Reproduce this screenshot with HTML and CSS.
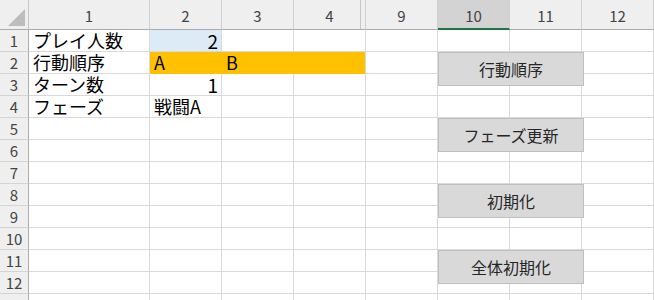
FILE: index.html
```html
<!DOCTYPE html>
<html lang="ja">
<head>
  <meta charset="UTF-8">
  <title>Sheet1</title>
  <link rel="stylesheet" href="styles.css">
</head>
<body>
  <div class="sheet">
    <div class="grid">
      <div class="corner">
        <svg width="29" height="30" viewBox="0 0 29 30"><polygon points="9,27 26,27 26,10" fill="#bdbdbd"/></svg>
      </div>
      <div class="ch">1</div>
      <div class="ch">2</div>
      <div class="ch">3</div>
      <div class="ch hidden-after">4</div>
      <div class="ch">9</div>
      <div class="ch selected">10</div>
      <div class="ch">11</div>
      <div class="ch">12</div>

      <div class="rh">1</div>
      <div class="cell">プレイ人数</div>
      <div class="cell num blue">2</div>
      <div class="cell"></div><div class="cell"></div><div class="cell"></div><div class="cell"></div><div class="cell"></div><div class="cell"></div>

      <div class="rh">2</div>
      <div class="cell">行動順序</div>
      <div class="cell orange">A</div>
      <div class="cell orange">B</div>
      <div class="cell orange last"></div>
      <div class="cell"></div><div class="cell"></div><div class="cell"></div><div class="cell"></div>

      <div class="rh">3</div>
      <div class="cell">ターン数</div>
      <div class="cell num">1</div>
      <div class="cell"></div><div class="cell"></div><div class="cell"></div><div class="cell"></div><div class="cell"></div><div class="cell"></div>

      <div class="rh">4</div>
      <div class="cell">フェーズ</div>
      <div class="cell">戦闘A</div>
      <div class="cell"></div><div class="cell"></div><div class="cell"></div><div class="cell"></div><div class="cell"></div><div class="cell"></div>

      <div class="rh">5</div>
      <div class="cell"></div><div class="cell"></div><div class="cell"></div><div class="cell"></div><div class="cell"></div><div class="cell"></div><div class="cell"></div><div class="cell"></div>
      <div class="rh">6</div>
      <div class="cell"></div><div class="cell"></div><div class="cell"></div><div class="cell"></div><div class="cell"></div><div class="cell"></div><div class="cell"></div><div class="cell"></div>
      <div class="rh">7</div>
      <div class="cell"></div><div class="cell"></div><div class="cell"></div><div class="cell"></div><div class="cell"></div><div class="cell"></div><div class="cell"></div><div class="cell"></div>
      <div class="rh">8</div>
      <div class="cell"></div><div class="cell"></div><div class="cell"></div><div class="cell"></div><div class="cell"></div><div class="cell"></div><div class="cell"></div><div class="cell"></div>
      <div class="rh">9</div>
      <div class="cell"></div><div class="cell"></div><div class="cell"></div><div class="cell"></div><div class="cell"></div><div class="cell"></div><div class="cell"></div><div class="cell"></div>
      <div class="rh">10</div>
      <div class="cell"></div><div class="cell"></div><div class="cell"></div><div class="cell"></div><div class="cell"></div><div class="cell"></div><div class="cell"></div><div class="cell"></div>
      <div class="rh">11</div>
      <div class="cell"></div><div class="cell"></div><div class="cell"></div><div class="cell"></div><div class="cell"></div><div class="cell"></div><div class="cell"></div><div class="cell"></div>
      <div class="rh">12</div>
      <div class="cell"></div><div class="cell"></div><div class="cell"></div><div class="cell"></div><div class="cell"></div><div class="cell"></div><div class="cell"></div><div class="cell"></div>
      <div class="rh">13</div>
      <div class="cell"></div><div class="cell"></div><div class="cell"></div><div class="cell"></div><div class="cell"></div><div class="cell"></div><div class="cell"></div><div class="cell"></div>
    </div>

    <!-- macro buttons sit on top of the grid -->
    <button class="macro btn-order">行動順序</button>
    <button class="macro btn-phase">フェーズ更新</button>
    <button class="macro btn-init">初期化</button>
    <button class="macro btn-reset">全体初期化</button>
  </div>
</body>
</html>
```

FILE: styles.css
```css
body {
  margin: 0;
  background: #fff;
  font-family: "Noto Sans CJK JP", "Noto Sans", sans-serif;
  color: #000;
}
.sheet {
  position: relative;
  width: 654px;
  height: 300px;
  overflow: hidden;
}
.grid {
  display: grid;
  grid-template-columns: 29px 121px repeat(7, 72px);
  grid-template-rows: 30px;
  grid-auto-rows: 22px;
}
.corner {
  background: #efefef;
  border-right: 1px solid #c6c6c6;
  border-bottom: 1px solid #ababab;
}
.corner svg {
  display: block;
  margin: -1px 0 0 -1px;
}
.ch {
  position: relative;
  background: #efefef;
  border-right: 1px solid #cfcfcf;
  border-bottom: 1px solid #ababab;
  color: #444;
  font-size: 15px;
  line-height: 32px;
  text-align: center;
}
.ch.selected {
  background: #d3d3d3;
  border-bottom: 2px solid #217346;
  line-height: 31px;
}
.ch.hidden-after::after {
  content: "";
  position: absolute;
  top: 0;
  bottom: 0;
  right: 4px;
  border-right: 1px solid #c6c6c6;
}
.rh {
  background: #efefef;
  border-right: 1px solid #ababab;
  border-bottom: 1px solid #d4d4d4;
  color: #444;
  font-size: 15px;
  line-height: 21px;
  text-align: center;
}
.cell {
  border-right: 1px solid #d9d9d9;
  border-bottom: 1px solid #d9d9d9;
  padding: 0 4px;
  font-size: 18px;
  line-height: 21px;
  white-space: nowrap;
}
.num {
  text-align: right;
  padding-right: 3px;
  font-size: 19px;
}
.blue {
  background: #ddebf7;
}
.orange {
  background: #ffc000;
  border-right-color: #ffc000;
  border-bottom-color: #ffc000;
}
.orange.last {
  border-right-color: #d9d9d9;
}
.macro {
  position: absolute;
  left: 438px;
  width: 146px;
  height: 34px;
  margin: 0;
  padding: 0;
  background: #d9d9d9;
  border: 1px solid #bfbfbf;
  border-radius: 0;
  color: #262626;
  font-family: inherit;
  font-size: 16px;
  line-height: 32px;
  text-align: center;
}
.btn-order { top: 52px; }
.btn-phase { top: 118px; }
.btn-init { top: 184px; }
.btn-reset { top: 250px; }
```
